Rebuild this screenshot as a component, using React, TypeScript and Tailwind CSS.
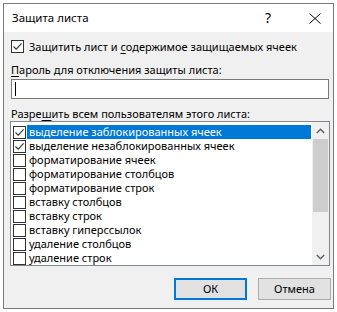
import { useState } from "react";

const items = [
  { label: "выделение заблокированных ячеек", checked: true },
  { label: "выделение незаблокированных ячеек", checked: true },
  { label: "форматирование ячеек", checked: false },
  { label: "форматирование столбцов", checked: false },
  { label: "форматирование строк", checked: false },
  { label: "вставку столбцов", checked: false },
  { label: "вставку строк", checked: false },
  { label: "вставку гиперссылок", checked: false },
  { label: "удаление столбцов", checked: false },
  { label: "удаление строк", checked: false },
];

function CheckBox({ checked }: { checked: boolean }) {
  return (
    <span className="flex h-[13px] w-[13px] shrink-0 items-center justify-center border border-[#333333] bg-white">
      {checked && (
        <svg width="11" height="11" viewBox="0 0 11 11">
          <path d="M1.5 5.5 L4.2 8.2 L9.6 2.4" fill="none" stroke="#333333" strokeWidth="1.1" />
        </svg>
      )}
    </span>
  );
}

export default function App() {
  const [protect, setProtect] = useState(true);
  const [rows, setRows] = useState(items);
  const [selected, setSelected] = useState(0);

  const toggle = (index: number) => {
    setRows(rows.map((r, i) => (i === index ? { ...r, checked: !r.checked } : r)));
  };

  return (
    <div className="h-[312px] w-[337px] overflow-hidden bg-white pl-[3px] pt-[3px] font-['Noto_Sans',sans-serif] text-[11px] text-black">
      <div className="flex h-[306px] w-[331px] flex-col border border-[#7a7a7a] bg-[#f0f0f0]">
        {/* title bar */}
        <div className="flex h-[28px] shrink-0 items-center bg-white pl-[8px]">
          <span className="flex-1 text-[11.5px]">Защита листа</span>
          <span className="mr-[38px] text-[14px] leading-none">?</span>
          <svg className="mr-[12px]" width="12" height="11" viewBox="0 0 12 11">
            <path d="M0.5 0.5 L11.5 10.5 M11.5 0.5 L0.5 10.5" stroke="#000" strokeWidth="1" />
          </svg>
        </div>

        <div className="flex flex-col pl-[7px]">
          <label
            className="mt-[8px] flex h-[13px] items-center gap-[5px]"
            onClick={() => setProtect(!protect)}
          >
            <CheckBox checked={protect} />
            <span className="leading-[13px]">
              Защитить лист и <span className="underline underline-offset-2">с</span>одержимое защищаемых ячеек
            </span>
          </label>

          <div className="mt-[9px] h-[16px] leading-[16px]">
            <span className="underline underline-offset-2">П</span>ароль для отключения защиты листа:
          </div>
          <div className="mt-[1px] flex h-[20px] w-[318px] items-center border border-[#7a7a7a] bg-white pl-[3px]">
            <span className="h-[14px] w-px bg-black" />
          </div>

          <div className="mt-[7px] h-[15px] leading-[15px]">
            Разре<span className="underline underline-offset-2">ш</span>ить всем пользователям этого листа:
          </div>

          <div className="-ml-px flex h-[145px] w-[320px] border border-[#828790] bg-white">
            <div className="flex flex-1 flex-col pl-[2px] pt-[3px]">
              {rows.map((row, i) => (
                <div
                  key={row.label}
                  className="flex h-[14px] items-center leading-[14px]"
                  onClick={() => setSelected(i)}
                >
                  <span onClick={() => toggle(i)}>
                    <CheckBox checked={row.checked} />
                  </span>
                  <span
                    className={
                      i === selected
                        ? "ml-px flex h-[14px] flex-1 items-center bg-[#0078d7] pl-[2px] text-white"
                        : "ml-px flex h-[14px] flex-1 items-center pl-[2px]"
                    }
                  >
                    {row.label}
                  </span>
                </div>
              ))}
            </div>
            <div className="ml-px flex w-[17px] flex-col bg-[#f0f0f0]">
              <div className="flex h-[17px] items-center justify-center">
                <svg width="9" height="6" viewBox="0 0 9 6">
                  <path d="M0.8 5 L4.5 1.3 L8.2 5" fill="none" stroke="#606060" strokeWidth="1.5" />
                </svg>
              </div>
              <div className="mx-px h-[73px] bg-[#cdcdcd]" />
              <div className="flex-1" />
              <div className="flex h-[17px] items-center justify-center">
                <svg width="9" height="6" viewBox="0 0 9 6">
                  <path d="M0.8 1 L4.5 4.7 L8.2 1" fill="none" stroke="#606060" strokeWidth="1.5" />
                </svg>
              </div>
            </div>
          </div>

          <div className="mt-[12px] flex justify-end gap-[11px] pr-[2px]">
            <button className="flex h-[22px] w-[73px] items-center justify-center border-2 border-[#0078d7] bg-[#e1e1e1]">
              ОК
            </button>
            <button className="flex h-[22px] w-[73px] items-center justify-center border border-[#adadad] bg-[#e1e1e1]">
              Отмена
            </button>
          </div>
        </div>
      </div>
    </div>
  );
}
